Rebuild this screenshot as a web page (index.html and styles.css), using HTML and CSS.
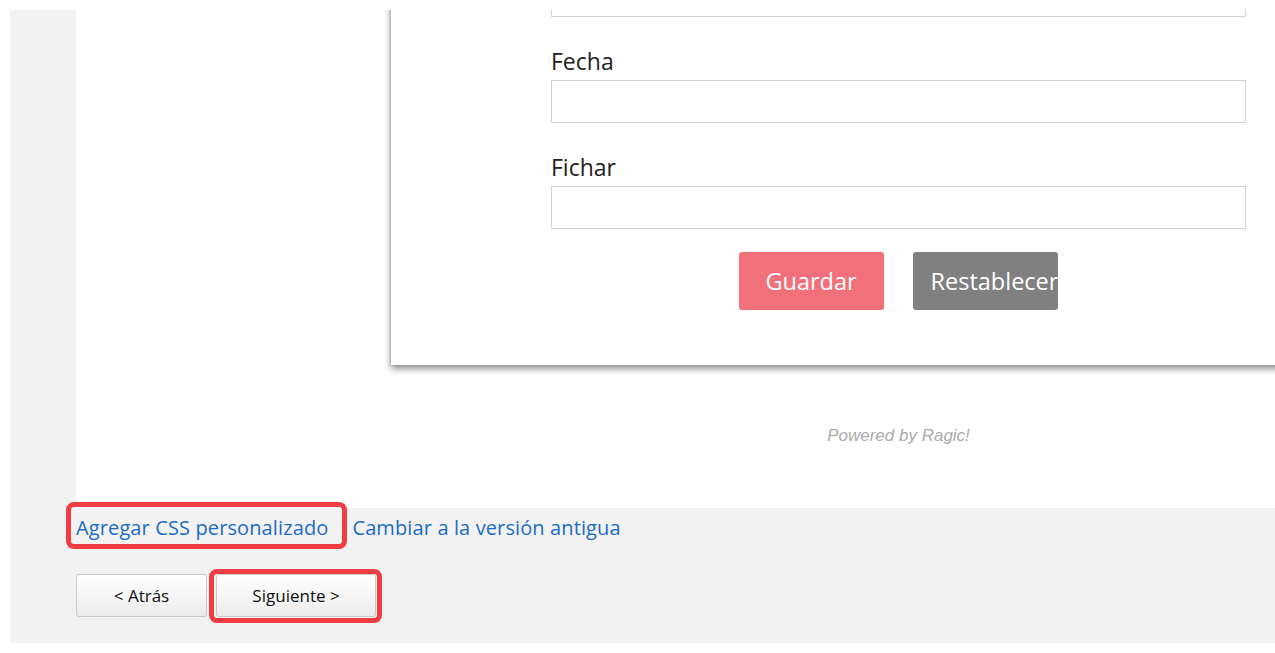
FILE: index.html
```html
<!DOCTYPE html>
<html lang="es">
<head>
<meta charset="utf-8">
<title>Formulario</title>
<link rel="stylesheet" href="styles.css">
</head>
<body>
<div class="page">
  <div class="shell">
    <div class="panel">
      <div class="card">
        <div class="input"></div>
        <label class="label">Fecha</label>
        <div class="input"></div>
        <label class="label">Fichar</label>
        <div class="input"></div>
        <div class="actions">
          <button class="btn btn-save">Guardar</button>
          <button class="btn btn-reset">Restablecer</button>
        </div>
      </div>
      <div class="powered">Powered by Ragic!</div>
    </div>
    <div class="links">
      <a class="link mark-a" href="#">Agregar CSS personalizado</a>
      <a class="link" href="#">Cambiar a la versión antigua</a>
    </div>
    <div class="nav">
      <button class="nav-btn back">&lt; Atrás</button>
      <button class="nav-btn next">Siguiente &gt;</button>
    </div>
  </div>
</div>
</body>
</html>
```
FILE: styles.css
```css
html, body {
  margin: 0;
  padding: 0;
  background: #fff;
  overflow: hidden;
}
.page {
  padding: 10px 0 10px 10px;
}
.shell {
  background: #f2f2f2;
  padding-bottom: 26px;
  font-family: "Open Sans", "Noto Sans", sans-serif;
}
.panel {
  margin-left: 66px;
  height: 498px;
  background: #fff;
  overflow: hidden;
}
.card {
  margin-top: -56px;
  margin-left: 315px;
  width: 695px;
  padding: 20px 160px 55px 160px;
  background: #fff;
  box-shadow: 0 4px 7px rgba(0, 0, 0, 0.42), -1px 0 3px rgba(0, 0, 0, 0.15);
}
.input {
  box-sizing: border-box;
  height: 43px;
  border: 1px solid #d2d2d2;
  background: #fff;
}
.label {
  display: block;
  margin-top: 30px;
  margin-bottom: 3px;
  height: 30px;
  line-height: 28px;
  font-size: 23px;
  color: #222;
}
.actions {
  display: flex;
  justify-content: center;
  gap: 29px;
  margin-top: 23px;
  padding-right: 1px;
}
.btn {
  box-sizing: border-box;
  width: 145px;
  height: 58px;
  border: 0;
  border-radius: 3px;
  color: #fff;
  font-family: "Open Sans", "Noto Sans", sans-serif;
  font-size: 23.5px;
  overflow: hidden;
  white-space: nowrap;
  padding: 0;
}
.btn-save {
  background: #f2707a;
  text-align: center;
}
.btn-reset {
  background: #808080;
  text-align: left;
  padding-left: 18px;
}
.powered {
  margin-top: 61px;
  margin-left: 315px;
  width: 1015px;
  text-align: center;
  font-family: "Liberation Sans", Arial, sans-serif;
  font-style: italic;
  font-size: 17px;
  line-height: 20px;
  color: #aaa;
}
.links {
  padding: 6px 0 0 66px;
  display: flex;
  gap: 24px;
  height: 28px;
  line-height: 28px;
  font-size: 20px;
  letter-spacing: 0.12px;
}
.link {
  color: #1b6cc6;
  text-decoration: none;
  position: relative;
}
.mark-a::after {
  content: "";
  position: absolute;
  left: -10px;
  top: -12px;
  width: 271px;
  height: 37px;
  border: 5px solid #f23c43;
  border-radius: 8px;
}
.nav {
  margin-top: 32px;
  padding-left: 66px;
  display: flex;
  gap: 9px;
}
.nav-btn {
  box-sizing: border-box;
  height: 43px;
  border: 1px solid #c9c9c9;
  border-radius: 3px;
  background: linear-gradient(#ffffff, #ececec);
  font-family: "Open Sans", "Noto Sans", sans-serif;
  font-size: 17px;
  color: #111;
  padding: 0;
  position: relative;
}
.back {
  width: 131px;
}
.next {
  width: 160px;
}
.next::after {
  content: "";
  position: absolute;
  left: -8px;
  top: -6px;
  width: 163px;
  height: 44px;
  border: 5px solid #f23c43;
  border-radius: 8px;
}
```
